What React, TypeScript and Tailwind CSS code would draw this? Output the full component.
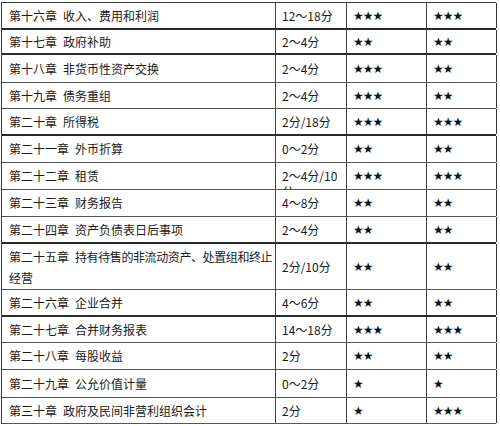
type Row = {
  ch: string;
  title: string;
  score: string;
  a: string;
  b: string;
  h: string;
  thick?: boolean;
};

const rows: Row[] = [
  { ch: "第十六章", title: "收入、费用和利润", score: "12～18分", a: "★★★", b: "★★★", h: "h-[27px]", thick: true },
  { ch: "第十七章", title: "政府补助", score: "2～4分", a: "★★", b: "★★", h: "h-[25px]", thick: true },
  { ch: "第十八章", title: "非货币性资产交换", score: "2～4分", a: "★★★", b: "★★", h: "h-[28px]" },
  { ch: "第十九章", title: "债务重组", score: "2～4分", a: "★★★", b: "★★", h: "h-[26px]" },
  { ch: "第二十章", title: "所得税", score: "2分/18分", a: "★★★", b: "★★★", h: "h-[27px]", thick: true },
  { ch: "第二十一章", title: "外币折算", score: "0～2分", a: "★★", b: "★★", h: "h-[27px]" },
  { ch: "第二十二章", title: "租赁", score: "2～4分/10分", a: "★★★", b: "★★★", h: "h-[27px]" },
  { ch: "第二十三章", title: "财务报告", score: "4～8分", a: "★★", b: "★★", h: "h-[27px]" },
  { ch: "第二十四章", title: "资产负债表日后事项", score: "2～4分", a: "★★", b: "★★", h: "h-[27px]", thick: true },
  { ch: "第二十五章", title: "持有待售的非流动资产、处置组和终止", score: "2分/10分", a: "★★", b: "★★", h: "h-[46px]" },
  { ch: "第二十六章", title: "企业合并", score: "4～6分", a: "★★", b: "★★", h: "h-[27px]", thick: true },
  { ch: "第二十七章", title: "合并财务报表", score: "14～18分", a: "★★★", b: "★★★", h: "h-[26px]" },
  { ch: "第二十八章", title: "每股收益", score: "2分", a: "★★", b: "★★", h: "h-[27px]" },
  { ch: "第二十九章", title: "公允价值计量", score: "0～2分", a: "★", b: "★", h: "h-[28px]" },
  { ch: "第三十章", title: "政府及民间非营利组织会计", score: "2分", a: "★", b: "★★★", h: "h-[26px]" },
];

function Stars({ v }: { v: string }) {
  return <span className="font-['DejaVu_Sans',sans-serif] text-[12px] tracking-[-1px] text-[#111]">{v}</span>;
}

export default function App() {
  return (
    <div className="min-h-[426px] w-[500px] bg-white pl-px pt-0.5 font-['Noto_Sans_CJK_SC',sans-serif] text-[12px] text-[#1a1a1a]">
      <div className="w-[495px] border-l border-t border-[#3a3a3a]">
        {rows.map((r, i) => (
          <div
            key={i}
            className={`grid grid-cols-[274px_71px_80px_70px] border-[#2a2a2a] ${r.h} ${
              r.thick ? "border-b-2" : "border-b border-b-[#555]"
            }`}
          >
            <div className="flex items-center overflow-hidden whitespace-nowrap border-r border-[#444] pl-[7px]">
              {i === 9 ? (
                <div className="leading-[21px]">
                  <span>{r.ch}</span>
                  <span className="ml-1.5 tracking-[-0.4px]">{r.title}</span>
                  <br />
                  <span>经营</span>
                </div>
              ) : (
                <>
                  <span>{r.ch}</span>
                  <span className="ml-1.5">{r.title}</span>
                </>
              )}
            </div>
            {i === 6 ? (
              <div className="overflow-hidden border-r border-[#444] pl-[6px] pr-1 pt-[5px] leading-[16px]">
                {r.score}
              </div>
            ) : (
              <div className="flex items-center border-r border-[#444] pl-[6px]">{r.score}</div>
            )}
            <div className="flex items-center border-r border-[#444] pl-[6px]">
              <Stars v={r.a} />
            </div>
            <div className="flex items-center border-r border-[#333] pl-[6px]">
              <Stars v={r.b} />
            </div>
          </div>
        ))}
      </div>
    </div>
  );
}
